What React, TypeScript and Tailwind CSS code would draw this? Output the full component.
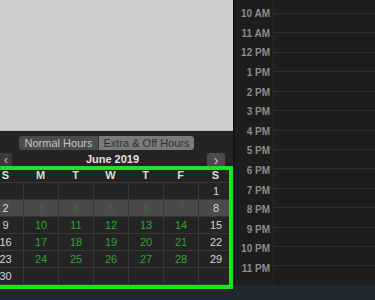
import React from 'react';

const hours = [
  '10 AM', '11 AM', '12 PM', '1 PM', '2 PM', '3 PM', '4 PM',
  '5 PM', '6 PM', '7 PM', '8 PM', '9 PM', '10 PM', '11 PM',
];

const weeks: (number | null)[][] = [
  [null, null, null, null, null, null, 1],
  [2, 3, 4, 5, 6, 7, 8],
  [9, 10, 11, 12, 13, 14, 15],
  [16, 17, 18, 19, 20, 21, 22],
  [23, 24, 25, 26, 27, 28, 29],
  [30, null, null, null, null, null, null],
];

const dayNames = ['S', 'M', 'T', 'W', 'T', 'F', 'S'];

function DayCell({ day, col, current }: { day: number | null; col: number; current: boolean }) {
  const weekend = col === 0 || col === 6;
  let color = 'text-[#d6d6d6]';
  if (!weekend) color = current ? 'text-[#2f8f2f]/40' : 'text-[#2ea52e]';
  return (
    <div
      className={`flex items-center justify-center h-[16px] text-[11px] ${color} ${
        col > 0 ? 'border-l border-[#383838]' : ''
      }`}
    >
      {day ?? ''}
    </div>
  );
}

export default function App() {
  return (
    <div className="w-[375px] h-[300px] flex overflow-hidden bg-[#1f282d] font-['Liberation_Sans',sans-serif]">
      {/* left: preview + mini calendar */}
      <div className="w-[233px] flex flex-col">
        <div className="h-[131px] bg-[#cecece] border-b border-[#bdbdbd]" />
        <div className="relative h-[154px] bg-[#242424] flex flex-col">
          <div className="flex ml-[19px] mt-[5px] h-[14px] w-[175px] rounded-[3px] overflow-hidden text-[11px] leading-[14px]">
            <div className="w-[79px] bg-[#4c4c4c] text-[#c4c4c4] text-center">Normal Hours</div>
            <div className="flex-1 bg-[#7b7b7b] text-[#303030] text-center border-l border-[#3a3a3a]">
              Extra &amp; Off Hours
            </div>
          </div>
          <div className="flex items-center h-[15px] mt-[2px]">
            <div className="w-[12px] h-[14px] bg-[#3a3a3a] rounded-r-[3px] flex items-center justify-center text-[#bbbbbb] text-[13px] leading-none">
              ‹
            </div>
            <div className="flex-1 text-center text-[11px] font-bold text-[#e2e2e2] pl-[6px]">June 2019</div>
            <div className="w-[18px] h-[14px] mr-[8px] bg-[#4a4a4a] rounded-[3px] flex items-center justify-center text-[#c8c8c8] text-[14px] leading-none">
              ›
            </div>
          </div>
          <div className="overflow-hidden">
            <div className="ml-[-12px] w-[245px]">
              <div className="grid grid-cols-7 h-[16px] border-b border-[#383838]">
                {dayNames.map((d, i) => (
                  <div key={i} className="flex items-end justify-center text-[11px] font-bold text-[#dcdcdc]">
                    {d}
                  </div>
                ))}
              </div>
              {weeks.map((w, r) => (
                <div
                  key={r}
                  className={`grid grid-cols-7 border-b border-[#383838] ${r === 1 ? 'bg-[#4a4a4a]' : ''}`}
                >
                  {w.map((d, c) => (
                    <DayCell key={c} day={d} col={c} current={r === 1} />
                  ))}
                </div>
              ))}
            </div>
          </div>
          {/* highlight frame drawn over the calendar */}
          <div className="absolute left-[-6px] top-[35px] w-[239px] h-[123px] border-[4px] border-[#22e022] pointer-events-none" />
        </div>
      </div>
      <div className="w-[2px] h-[285px] bg-[#121212]" />
      {/* right: day timeline */}
      <div className="flex-1 h-[285px] bg-[#1d1d1d] flex">
        <div className="w-[38px] pt-[4px] flex flex-col">
          {hours.map((h) => (
            <div key={h} className="h-[19.6px] flex items-center justify-end pr-[3px] text-[10px] font-bold text-[#8c8c8c]">
              {h}
            </div>
          ))}
        </div>
        <div className="flex-1 border-l border-[#2a2a2a] pt-[13px] flex flex-col">
          {hours.map((h) => (
            <div key={h} className="h-[19.6px] border-t border-[#2e2e2e]" />
          ))}
        </div>
      </div>
    </div>
  );
}
